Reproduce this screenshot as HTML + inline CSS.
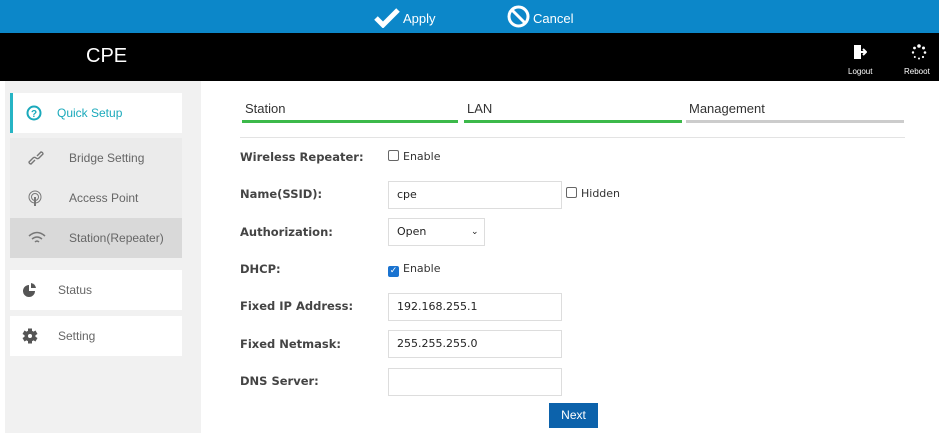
<!DOCTYPE html><html><head><style>
*{margin:0;padding:0;box-sizing:border-box}
body{width:939px;height:437px;background:#fff;font-family:"Liberation Sans",sans-serif;position:relative;overflow:hidden}
.a{position:absolute}
.top{left:0;top:0;width:939px;height:33px;background:#0c87c9}
.blk{left:0;top:33px;width:939px;height:48px;background:#000}
.side{left:5px;top:81px;width:196px;height:352px;background:#f1f1f1}
.main{left:201px;top:81px;width:738px;height:352px;background:#fff}
.it{left:10px;width:172px;height:40px;font-size:12px;color:#666;display:flex;align-items:center}
.lab{left:240px;font-weight:bold;color:#444;font-family:"DejaVu Sans",sans-serif;font-size:11.5px}
.inp{left:388px;width:174px;height:28px;border:1px solid #ddd;background:#fff;padding-left:8px;line-height:26px;color:#222;font-family:"DejaVu Sans";font-size:11px}
.cb{width:11px;height:11px;border:1px solid #666;border-radius:2px;display:inline-block;vertical-align:-1px;margin-right:4px}
.t{font-size:11px;color:#333;font-family:"DejaVu Sans"}
</style></head><body>
<div class="a top"></div>
<svg class="a" style="left:374px;top:8px" width="26" height="20" viewBox="0 0 26 20"><path d="M2 10l7 7L24 2" stroke="#fff" stroke-width="5" fill="none"/></svg>
<div class="a" style="left:403px;top:11px;color:#fff;font-size:13px">Apply</div>
<svg class="a" style="left:507px;top:5px" width="23" height="23"><circle cx="11.5" cy="11.5" r="9.5" stroke="#fff" stroke-width="3" fill="none"/><path d="M5 5l13 13" stroke="#fff" stroke-width="3"/></svg>
<div class="a" style="left:533px;top:11px;color:#fff;font-size:13px">Cancel</div>
<div class="a blk"></div>
<div class="a" style="left:86px;top:45px;color:#fff;font-size:20px">CPE</div>
<svg class="a" style="left:853px;top:44px" width="14" height="16"><rect x="1" y="1" width="7" height="14" fill="#fff"/><path d="M7 8h6M10 5l3 3-3 3" stroke="#fff" stroke-width="2" fill="none"/></svg>
<div class="a" style="left:848px;top:67px;color:#fff;font-size:8px">Logout</div>
<svg class="a" style="left:911px;top:44px" width="16" height="16"><g fill="#fff"><circle cx="8" cy="2" r="1.8"/><circle cx="12.5" cy="4" r="1.5"/><circle cx="14" cy="8.5" r="1.3"/><circle cx="12" cy="13" r="1.1"/><circle cx="8" cy="14.5" r="1"/><circle cx="3.8" cy="13" r="1"/><circle cx="2" cy="8.5" r="1.2"/><circle cx="3.5" cy="4" r="1.4"/></g></svg>
<div class="a" style="left:904px;top:67px;color:#fff;font-size:8px">Reboot</div>
<div class="a side"></div>
<div class="a main"></div>
<div class="a it" style="top:93px;background:#fff;border-left:3px solid #26b4c4;color:#1aa9bb"><svg style="margin:0 15px 0 13px" width="16" height="16"><circle cx="8" cy="8" r="6.5" stroke="#1aa9bb" stroke-width="2" fill="none"/><text x="5" y="12" font-size="10" font-weight="bold" fill="#1aa9bb">?</text></svg>Quick Setup</div>
<div class="a it" style="top:138px;background:#ebebeb"><svg style="margin:0 25px 0 18px" width="16" height="16"><path d="M7 10L3 14a2 2 0 0 1-2-2l4-4a2 2 0 0 1 3 0M9 6l4-4a2 2 0 0 1 2 2l-4 4a2 2 0 0 1-3 0" stroke="#777" stroke-width="1.4" fill="none"/></svg>Bridge Setting</div>
<div class="a it" style="top:178px;background:#ebebeb"><svg style="margin:0 27px 0 18px" width="14" height="16"><circle cx="7" cy="7" r="6" stroke="#777" fill="none"/><circle cx="7" cy="7" r="3.5" stroke="#777" fill="none"/><path d="M7 7v9" stroke="#777" stroke-width="2"/></svg>Access Point</div>
<div class="a it" style="top:218px;background:#d9d9d9"><svg style="margin:0 23px 0 18px" width="18" height="14"><path d="M1 5q8-7 16 0M4 8q5-4 10 0M7 11q2-2 4 0" stroke="#777" stroke-width="1.5" fill="none"/></svg>Station(Repeater)</div>
<div class="a it" style="top:270px;background:#fff"><svg style="margin:0 20px 0 12px" width="16" height="16"><path d="M7 3A6 6 0 1 0 13 9H7Z" fill="#555"/><path d="M9 1a6 6 0 0 1 5 5H9Z" fill="#555"/></svg>Status</div>
<div class="a it" style="top:316px;background:#fff"><svg style="margin:0 20px 0 12px" width="16" height="16"><g fill="#555"><rect x="6" y="0.5" width="4" height="15"/><rect x="6" y="0.5" width="4" height="15" transform="rotate(60 8 8)"/><rect x="6" y="0.5" width="4" height="15" transform="rotate(120 8 8)"/><circle cx="8" cy="8" r="5.5"/></g><circle cx="8" cy="8" r="2" fill="#fff"/></svg>Setting</div>
<div class="a" style="left:245px;top:101px;font-size:13px;color:#333">Station</div>
<div class="a" style="left:467px;top:101px;font-size:13px;color:#333">LAN</div>
<div class="a" style="left:689px;top:101px;font-size:13px;color:#333">Management</div>
<div class="a" style="left:242px;top:120px;width:216px;height:3px;background:#3cb94a"></div>
<div class="a" style="left:464px;top:120px;width:218px;height:3px;background:#3cb94a"></div>
<div class="a" style="left:686px;top:120px;width:218px;height:3px;background:#ccc"></div>
<div class="a" style="left:240px;top:137px;width:665px;height:1px;background:#e3e3e3"></div>
<div class="a lab" style="top:150px">Wireless Repeater:</div>
<div class="a t" style="left:388px;top:150px"><span class="cb"></span>Enable</div>
<div class="a lab" style="top:187px">Name(SSID):</div>
<div class="a inp" style="top:181px">cpe</div>
<div class="a t" style="left:566px;top:187px"><span class="cb"></span>Hidden</div>
<div class="a lab" style="top:225px">Authorization:</div>
<div class="a inp" style="top:218px;width:97px">Open<span style="position:absolute;left:82px;font-size:9px">&#x2304;</span></div>
<div class="a lab" style="top:262px">DHCP:</div>
<div class="a t" style="left:388px;top:262px"><span class="cb" style="background:#1a73d0;border-color:#1a73d0;color:#fff;font-size:9px;line-height:9px;text-align:center">✓</span>Enable</div>
<div class="a lab" style="top:299px">Fixed IP Address:</div>
<div class="a inp" style="top:293px">192.168.255.1</div>
<div class="a lab" style="top:337px">Fixed Netmask:</div>
<div class="a inp" style="top:330px">255.255.255.0</div>
<div class="a lab" style="top:374px">DNS Server:</div>
<div class="a inp" style="top:368px"></div>
<div class="a" style="left:549px;top:403px;width:49px;height:25px;background:#0c62ab;color:#fff;font-size:12px;text-align:center;line-height:25px">Next</div>
</body></html>
